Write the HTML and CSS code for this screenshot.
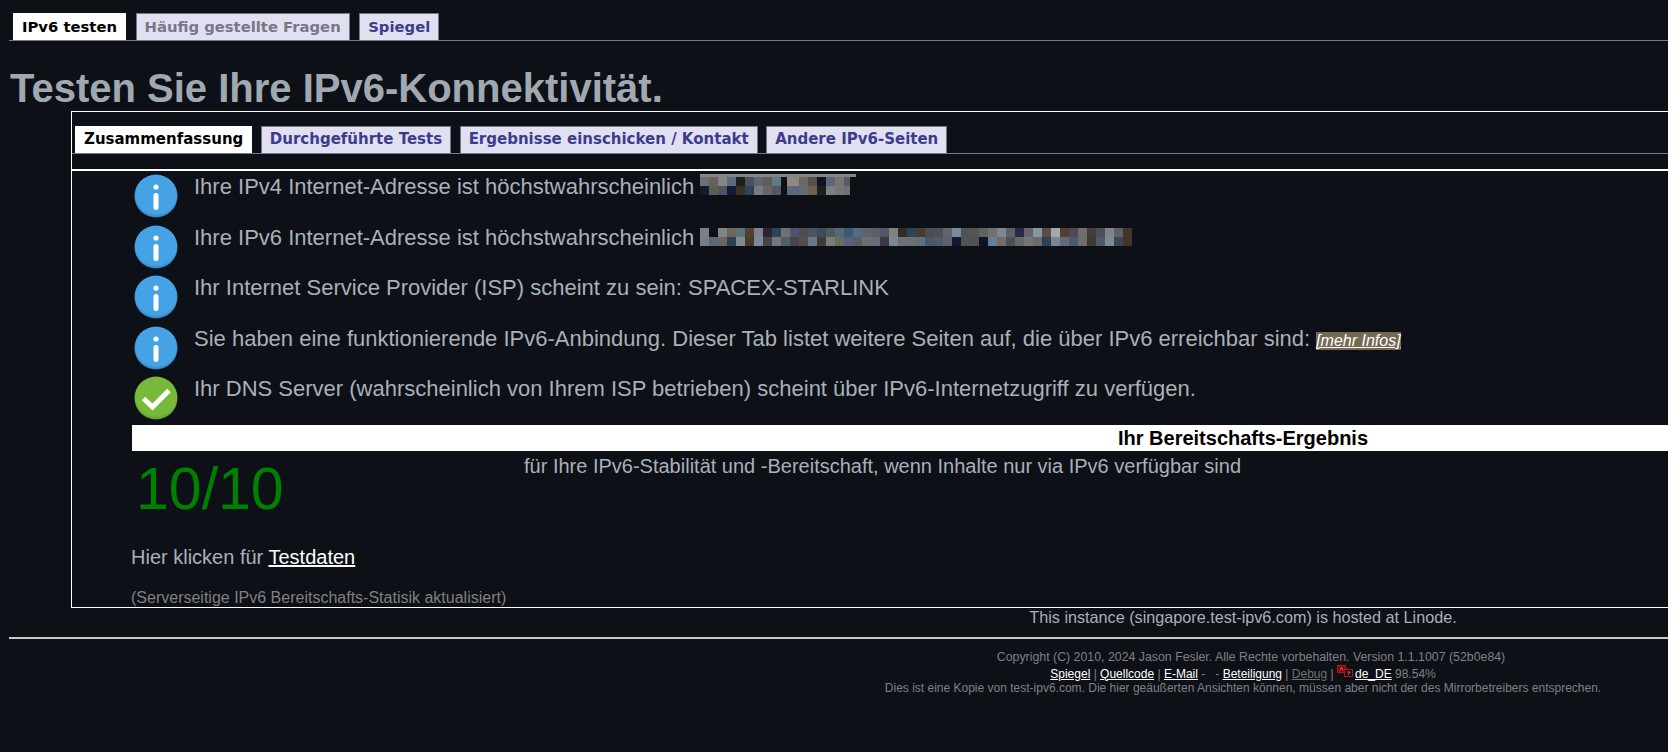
FILE: index.html
```html
<!DOCTYPE html>
<html lang="de">
<head>
<meta charset="UTF-8">
<meta name="viewport" content="width=device-width, initial-scale=1.0">
<title>Testen Sie Ihre IPv6-Konnektivität.</title>
<link rel="stylesheet" href="styles.css">
</head>
<body>
<div class="page">
    <ul class="tabs top-tabs">
        <li class="tab active"><a href="#">IPv6 testen</a></li>
        <li class="tab"><a href="#" class="visited">Häufig gestellte Fragen</a></li>
        <li class="tab"><a href="#">Spiegel</a></li>
    </ul>

    <h1>Testen Sie Ihre IPv6-Konnektivität.</h1>

    <div class="panel">
        <ul class="tabs inner-tabs">
            <li class="tab active"><a href="#">Zusammenfassung</a></li>
            <li class="tab"><a href="#">Durchgeführte Tests</a></li>
            <li class="tab"><a href="#">Ergebnisse einschicken / Kontakt</a></li>
            <li class="tab"><a href="#">Andere IPv6-Seiten</a></li>
        </ul>
        <div class="rule"></div>

        <div class="results">
            <div class="row">
                <svg class="icon" viewBox="0 0 44 44"><use href="#info"/></svg>
                <p>Ihre IPv4 Internet-Adresse ist höchstwahrscheinlich
                    <svg class="mosaic mosaic-v4" width="156" height="21" viewBox="0 0 156 21" shape-rendering="crispEdges">
                        <rect x="0" y="0" width="156" height="3" fill="#858585"/>
                        <rect x="0" y="3" width="9" height="9" fill="#6c6f74"/><rect x="9" y="3" width="9" height="9" fill="#66625a"/><rect x="18" y="3" width="9" height="9" fill="#7f8688"/><rect x="27" y="3" width="9" height="9" fill="#5f6b7a"/><rect x="36" y="3" width="9" height="9" fill="#1f1f20"/><rect x="45" y="3" width="9" height="9" fill="#4a5260"/><rect x="54" y="3" width="9" height="9" fill="#5f676c"/><rect x="63" y="3" width="9" height="9" fill="#5e5c5c"/><rect x="72" y="3" width="9" height="9" fill="#5f7a88"/>
                        <rect x="87" y="3" width="12" height="9" fill="#8f8a7e"/><rect x="99" y="3" width="9" height="9" fill="#6a6866"/><rect x="108" y="3" width="9" height="9" fill="#5a4f48"/><rect x="117" y="3" width="9" height="9" fill="#0c1428"/><rect x="126" y="3" width="9" height="9" fill="#63666e"/><rect x="135" y="3" width="9" height="9" fill="#7b7674"/><rect x="144" y="3" width="6" height="9" fill="#5c5c60"/>
                        <rect x="0" y="12" width="9" height="9" fill="#0e1f33"/><rect x="9" y="12" width="9" height="9" fill="#5e5d52"/><rect x="18" y="12" width="9" height="9" fill="#51545e"/><rect x="27" y="12" width="9" height="9" fill="#101a38"/><rect x="36" y="12" width="9" height="9" fill="#3a3224"/><rect x="45" y="12" width="9" height="9" fill="#2c4453"/><rect x="54" y="12" width="9" height="9" fill="#787b7e"/><rect x="63" y="12" width="9" height="9" fill="#63666a"/><rect x="72" y="12" width="9" height="9" fill="#55585c"/>
                        <rect x="87" y="12" width="12" height="9" fill="#5a6a7c"/><rect x="99" y="12" width="9" height="9" fill="#656c70"/><rect x="108" y="12" width="9" height="9" fill="#6e5f50"/><rect x="117" y="12" width="9" height="9" fill="#1f1f1c"/><rect x="126" y="12" width="9" height="9" fill="#76828a"/><rect x="135" y="12" width="9" height="9" fill="#767676"/><rect x="144" y="12" width="6" height="9" fill="#707070"/>
                    </svg>
                </p>
            </div>
            <div class="row">
                <svg class="icon" viewBox="0 0 44 44"><use href="#info"/></svg>
                <p>Ihre IPv6 Internet-Adresse ist höchstwahrscheinlich
                    <svg class="mosaic mosaic-v6" width="432" height="18" viewBox="0 0 432 18" shape-rendering="crispEdges">
                        <rect x="9" y="0" width="9" height="9" fill="#0d1017"/><rect x="0" y="0" width="9" height="9" fill="#7d7f82"/><rect x="18" y="0" width="9" height="9" fill="#7f8684"/><rect x="27" y="0" width="9" height="9" fill="#6c685e"/><rect x="36" y="0" width="9" height="9" fill="#5e7078"/><rect x="45" y="0" width="9" height="9" fill="#503f32"/><rect x="54" y="0" width="9" height="9" fill="#80838c"/><rect x="63" y="0" width="9" height="9" fill="#2c2630"/><rect x="72" y="0" width="9" height="9" fill="#2c4458"/><rect x="81" y="0" width="9" height="9" fill="#6b7278"/><rect x="90" y="0" width="9" height="9" fill="#4f5270"/><rect x="99" y="0" width="9" height="9" fill="#4d4d50"/>
                        <rect x="108" y="0" width="9" height="9" fill="#4a555c"/><rect x="117" y="0" width="9" height="9" fill="#3d4c5c"/><rect x="126" y="0" width="9" height="9" fill="#515c58"/><rect x="135" y="0" width="9" height="9" fill="#506a80"/><rect x="144" y="0" width="9" height="9" fill="#3a5a74"/><rect x="153" y="0" width="9" height="9" fill="#566c82"/><rect x="162" y="0" width="9" height="9" fill="#5f646c"/><rect x="171" y="0" width="9" height="9" fill="#5a6066"/><rect x="180" y="0" width="9" height="9" fill="#505868"/><rect x="189" y="0" width="9" height="9" fill="#85827e"/><rect x="198" y="0" width="9" height="9" fill="#332a2a"/><rect x="207" y="0" width="9" height="9" fill="#2c4458"/>
                        <rect x="216" y="0" width="9" height="9" fill="#4a3c2a"/><rect x="225" y="0" width="9" height="9" fill="#4d4d50"/><rect x="234" y="0" width="9" height="9" fill="#4a505c"/><rect x="243" y="0" width="9" height="9" fill="#636666"/><rect x="252" y="0" width="9" height="9" fill="#788a9c"/><rect x="261" y="0" width="9" height="9" fill="#4a5656"/><rect x="270" y="0" width="9" height="9" fill="#555553"/><rect x="279" y="0" width="9" height="9" fill="#5c6364"/><rect x="288" y="0" width="9" height="9" fill="#72706e"/><rect x="297" y="0" width="9" height="9" fill="#7a8a94"/><rect x="306" y="0" width="9" height="9" fill="#5a6268"/><rect x="315" y="0" width="9" height="9" fill="#242a48"/>
                        <rect x="324" y="0" width="9" height="9" fill="#62656e"/><rect x="333" y="0" width="9" height="9" fill="#84989f"/><rect x="342" y="0" width="9" height="9" fill="#5a4e42"/><rect x="351" y="0" width="9" height="9" fill="#a2a8ac"/><rect x="360" y="0" width="9" height="9" fill="#52402c"/><rect x="369" y="0" width="9" height="9" fill="#4c4a56"/><rect x="378" y="0" width="9" height="9" fill="#706c68"/><rect x="387" y="0" width="9" height="9" fill="#403e3e"/><rect x="396" y="0" width="9" height="9" fill="#4c4e5a"/><rect x="405" y="0" width="9" height="9" fill="#7c868c"/><rect x="414" y="0" width="9" height="9" fill="#5e6268"/><rect x="423" y="0" width="9" height="9" fill="#40362a"/>
                        <rect x="0" y="9" width="9" height="9" fill="#7a7d82"/><rect x="9" y="9" width="9" height="9" fill="#56687a"/><rect x="18" y="9" width="9" height="9" fill="#6a6666"/><rect x="27" y="9" width="9" height="9" fill="#2e4256"/><rect x="36" y="9" width="9" height="9" fill="#7e8e8e"/><rect x="45" y="9" width="9" height="9" fill="#4c3a28"/><rect x="54" y="9" width="9" height="9" fill="#7c8a98"/><rect x="63" y="9" width="9" height="9" fill="#40464c"/><rect x="72" y="9" width="9" height="9" fill="#74767a"/><rect x="81" y="9" width="9" height="9" fill="#525e68"/><rect x="90" y="9" width="9" height="9" fill="#4a444a"/><rect x="99" y="9" width="9" height="9" fill="#505052"/>
                        <rect x="108" y="9" width="9" height="9" fill="#66788a"/><rect x="117" y="9" width="9" height="9" fill="#443a34"/><rect x="126" y="9" width="9" height="9" fill="#728078"/><rect x="135" y="9" width="9" height="9" fill="#6e6a5e"/><rect x="144" y="9" width="9" height="9" fill="#5a6078"/><rect x="153" y="9" width="9" height="9" fill="#5c5c64"/><rect x="162" y="9" width="9" height="9" fill="#6a706c"/><rect x="171" y="9" width="9" height="9" fill="#646c78"/><rect x="180" y="9" width="9" height="9" fill="#3a3a44"/><rect x="189" y="9" width="9" height="9" fill="#788898"/><rect x="198" y="9" width="9" height="9" fill="#687078"/><rect x="207" y="9" width="9" height="9" fill="#70706e"/>
                        <rect x="216" y="9" width="9" height="9" fill="#5e7080"/><rect x="225" y="9" width="9" height="9" fill="#46586a"/><rect x="234" y="9" width="9" height="9" fill="#4c5a6a"/><rect x="243" y="9" width="9" height="9" fill="#5c6268"/><rect x="252" y="9" width="9" height="9" fill="#1c1430"/><rect x="261" y="9" width="9" height="9" fill="#4a5654"/><rect x="270" y="9" width="9" height="9" fill="#54524e"/><rect x="279" y="9" width="9" height="9" fill="#0c1428"/><rect x="288" y="9" width="9" height="9" fill="#648094"/><rect x="297" y="9" width="9" height="9" fill="#746c64"/><rect x="306" y="9" width="9" height="9" fill="#4e5058"/><rect x="315" y="9" width="9" height="9" fill="#66686a"/>
                        <rect x="324" y="9" width="9" height="9" fill="#70767a"/><rect x="333" y="9" width="9" height="9" fill="#706864"/><rect x="342" y="9" width="9" height="9" fill="#2c4258"/><rect x="351" y="9" width="9" height="9" fill="#7a8694"/><rect x="360" y="9" width="9" height="9" fill="#646a7a"/><rect x="369" y="9" width="9" height="9" fill="#465a70"/><rect x="378" y="9" width="9" height="9" fill="#6e6e6c"/><rect x="387" y="9" width="9" height="9" fill="#3e3a30"/><rect x="396" y="9" width="9" height="9" fill="#525868"/><rect x="405" y="9" width="9" height="9" fill="#7c8a94"/><rect x="414" y="9" width="9" height="9" fill="#3c4658"/><rect x="423" y="9" width="9" height="9" fill="#40362a"/>
                    </svg>
                </p>
            </div>
            <div class="row">
                <svg class="icon" viewBox="0 0 44 44"><use href="#info"/></svg>
                <p>Ihr Internet Service Provider (ISP) scheint zu sein: SPACEX-STARLINK</p>
            </div>
            <div class="row">
                <svg class="icon" viewBox="0 0 44 44"><use href="#info"/></svg>
                <p>Sie haben eine funktionierende IPv6-Anbindung. Dieser Tab listet weitere Seiten auf, die über IPv6 erreichbar sind: <a href="#" class="more">[mehr Infos]</a></p>
            </div>
            <div class="row">
                <svg class="icon" viewBox="0 0 44 44"><use href="#check"/></svg>
                <p>Ihr DNS Server (wahrscheinlich von Ihrem ISP betrieben) scheint über IPv6-Internetzugriff zu verfügen.</p>
            </div>

            <div class="score-head">Ihr Bereitschafts-Ergebnis</div>
            <div class="score-row">
                <div class="score">10/10</div>
                <div class="score-text">für Ihre IPv6-Stabilität und -Bereitschaft, wenn Inhalte nur via IPv6 verfügbar sind</div>
            </div>
            <p class="testdata">Hier klicken für <a href="#">Testdaten</a></p>
            <p class="stats">(Serverseitige IPv6 Bereitschafts-Statisik aktualisiert)</p>
        </div>
    </div>

    <p class="hosted">This instance (singapore.test-ipv6.com) is hosted at Linode.</p>
    <hr class="footer-line">

    <div class="footer">
        <div class="copyright">Copyright (C) 2010, 2024 Jason Fesler. Alle Rechte vorbehalten. Version 1.1.1007 (52b0e84)</div>
        <div><a href="#">Spiegel</a> | <a href="#">Quellcode</a> | <a href="#">E-Mail</a> - &nbsp; - <a href="#">Beteiligung</a> | <a href="#" class="debug">Debug</a> | <svg class="lang" width="18" height="12" viewBox="0 0 18 12"><rect x="0.5" y="0.5" width="8" height="7" fill="#7a0c0c" stroke="#c01010"/><rect x="7.5" y="4.5" width="8" height="7" fill="#0d1017" stroke="#c01010"/><path d="M3 5.5 4.5 2 6 5.5M10 7h3.5M11 10l2-3" fill="none" stroke="#e05050"/></svg><a href="#">de_DE</a> 98.54%</div>
        <div>Dies ist eine Kopie von test-ipv6.com. Die hier geäußerten Ansichten können, müssen aber nicht der des Mirrorbetreibers entsprechen.</div>
    </div>
</div>

<!-- shared status icons -->
<svg class="defs" width="0" height="0">
    <defs>
        <radialGradient id="blue" cx="50%" cy="45%" r="55%">
            <stop offset="85%" stop-color="#45a3e5"/>
            <stop offset="100%" stop-color="#3580c0"/>
        </radialGradient>
        <radialGradient id="green" cx="50%" cy="45%" r="55%">
            <stop offset="85%" stop-color="#78b83a"/>
            <stop offset="100%" stop-color="#5a9a2a"/>
        </radialGradient>
        <g id="info">
            <circle cx="22" cy="22" r="21.5" fill="url(#blue)"/>
            <circle cx="22" cy="13" r="2.6" fill="#fff"/>
            <rect x="19.5" y="19" width="5" height="17" rx="2.5" fill="#fff"/>
        </g>
        <g id="check">
            <circle cx="22" cy="22" r="21.5" fill="url(#green)"/>
            <path d="M9.5 22.5 18.5 31 35 14.5" fill="none" stroke="#fff" stroke-width="5"/>
        </g>
    </defs>
</svg>
</body>
</html>
```

FILE: styles.css
```css
html {
    overflow: hidden;
}
body {
    background-color: #0d1017;
    margin: 0;
    font-family: "Liberation Sans", Arial, sans-serif;
    color: #a9b1b8;
}
.page {
    width: 2468px;
    margin-left: 9px;
    padding-top: 13px;
}
.defs {
    position: absolute;
}
.tabs {
    display: flex;
    list-style: none;
    margin: 0;
    border-bottom: 1px solid #77778a;
    font-family: "DejaVu Sans", Verdana, sans-serif;
    font-weight: bold;
}
.top-tabs {
    gap: 9.5px;
    padding: 0 0 0 4px;
    font-size: 14.8px;
}
.inner-tabs {
    gap: 8.5px;
    padding: 14px 0 0 3px;
    font-size: 15px;
}
.tab {
    height: 26px;
    line-height: 25px;
    padding: 0 8px;
    background-color: #e0e0f0;
    border: 1px solid #77778a;
    border-bottom: none;
}
.tab a {
    color: #3c3c8c;
    text-decoration: none;
}
.tab a.visited {
    color: #77778a;
}
.tab.active {
    background-color: white;
    border-color: white;
}
.tab.active a {
    color: black;
}
h1 {
    margin: 24px 0 0 1px;
    font-size: 40px;
    line-height: 46px;
    font-weight: bold;
    color: #a1a9b0;
}
.panel {
    margin-left: 62px;
    height: 495px;
    border: 1px solid white;
    overflow: hidden;
}
.rule {
    height: 2px;
    margin-top: 15px;
    background-color: white;
}
.results {
    padding-left: 60px;
}
.row {
    display: flex;
    gap: 16px;
    height: 50.5px;
    padding: 3px 0 0 2px;
    box-sizing: border-box;
}
.row p {
    margin: 0;
    font-size: 22px;
    line-height: 26px;
    display: flex;
    align-items: flex-start;
    gap: 6px;
}
.icon {
    width: 44px;
    height: 44px;
    flex: none;
}
.mosaic {
    flex: none;
}
.mosaic-v6 {
    margin-top: 3px;
}
.more {
    color: white;
    background-color: #746a52;
    font-size: 16px;
    font-style: italic;
    line-height: 18px;
    margin-top: 6px;
}
.score-head {
    margin-top: 1px;
    width: 2222px;
    height: 26px;
    line-height: 26px;
    background-color: white;
    color: black;
    font-size: 20px;
    font-weight: bold;
    text-align: center;
}
.score-row {
    display: flex;
}
.score {
    width: 392px;
    padding: 5px 0 0 4px;
    box-sizing: border-box;
    font-size: 59px;
    line-height: 66px;
    color: #008000;
}
.score-text {
    font-size: 20px;
    line-height: 30px;
}
.testdata {
    margin: 23px 0 0 -1px;
    font-size: 20px;
    line-height: 24px;
}
.testdata a {
    color: white;
}
.stats {
    margin: 19px 0 0 -1px;
    font-size: 16px;
    line-height: 20px;
    color: #808080;
}
.hosted {
    margin: 0;
    height: 29px;
    line-height: 18px;
    font-size: 16.2px;
    text-align: center;
}
.footer-line {
    margin: 0;
    height: 2px;
    border: none;
    background-color: #c8c8c8;
}
.footer {
    margin-top: 12px;
    font-size: 12px;
    line-height: 14.5px;
    text-align: center;
    color: #808080;
}
.footer a {
    color: white;
}
.footer a.debug {
    color: #707070;
}
.copyright {
    padding-left: 16px;
    font-size: 12.35px;
    line-height: 13.5px;
}
.lang {
    vertical-align: 1px;
}
```
